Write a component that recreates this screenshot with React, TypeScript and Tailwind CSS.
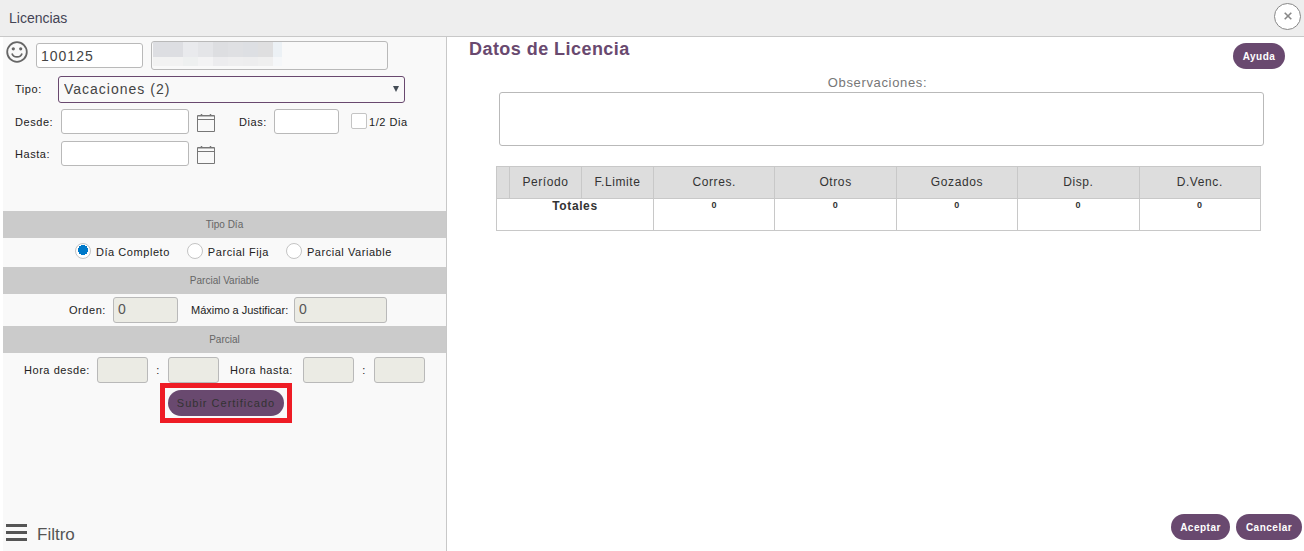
import React from "react";

const field = "h-[25px] rounded-[3px] border border-[#b9b9b9] bg-white px-1 text-sm tracking-[1px] text-[#444]";
const disabledField = "h-[26px] rounded-[3px] border border-[#b9b9b9] bg-[#ebebe4] px-1 pb-[2px] text-sm tracking-normal text-[#555]";
const pill = "h-[26px] rounded-full bg-[#69496f] text-[10px] font-bold tracking-wider text-white";

function Band({ children }: { children: React.ReactNode }) {
  return (
    <h2 className="flex h-[27px] items-center justify-center bg-[#cbcbcb] text-[10px] tracking-normal text-[#666]">{children}</h2>
  );
}

function CalendarButton({ label }: { label: string }) {
  return (
    <button type="button" aria-label={label} className="ml-2 mt-1">
      <svg width="18" height="20" viewBox="0 0 18 20" fill="none" stroke="#777">
        <path d="M.5 2.5h17v16H.5zM0 6.5h18" />
        <path d="M4.5 1v3M13.5 1v3" strokeWidth="1.5" />
        <path d="M1 3.5h16" stroke="#bbb" />
      </svg>
    </button>
  );
}

function DayRadio({ label, checked }: { label: string; checked?: boolean }) {
  return (
    <label className="flex items-center gap-[5px]">
      <input
        type="radio"
        name="tipo-dia"
        defaultChecked={checked}
        className="mb-[3px] size-4 appearance-none rounded-full border border-[#c4c4c4] bg-white bg-[radial-gradient(circle_at_7px_6px,#0079c9_5px,transparent_5px)] bg-size-[0_0] bg-no-repeat checked:bg-size-[100%_100%]"
      />
      {label}
    </label>
  );
}

const mosaic = [
  { w: "w-[30px]", top: "bg-[#dddee2]", low: "bg-[#f2f2f2]" },
  { w: "w-[15px]", top: "bg-[#e9eaed]", low: "bg-[#eef0f0]" },
  { w: "w-[15px]", top: "bg-[#e4e5e8]", low: "bg-[#f3f3f4]" },
  { w: "w-[15px]", top: "bg-[#dddee1]", low: "bg-[#ececee]" },
  { w: "w-[15px]", top: "bg-[#dfe0e3]", low: "bg-[#eeeeef]" },
  { w: "w-[15px]", top: "bg-[#dddfe3]", low: "bg-[#ededee]" },
  { w: "w-[15px]", top: "bg-[#dfdfe0]", low: "bg-[#efefef]" },
  { w: "w-[9px]", top: "bg-[#ecf1f5]", low: "bg-[#f5f7f9]" },
];

const totals = ["Corres.", "Otros", "Gozados", "Disp.", "D.Venc."];

export default function App() {
  return (
    <div className="flex min-h-screen flex-col bg-white font-['Liberation_Sans',Arial,sans-serif] text-[11px] text-[#222]">
      <header className="flex h-[37px] items-center justify-between border-b border-[#c8c8c8] bg-[#eee] pl-[9px] pr-[3px]">
        <h1 className="text-sm text-[#445]">Licencias</h1>
        <button
          type="button"
          aria-label="Cerrar"
          className="mb-1 flex size-[27px] items-center justify-center rounded-full border border-[#888] bg-white"
        >
          <svg width="8" height="8" viewBox="0 0 8 8" stroke="#888" strokeWidth="1.6">
            <path d="M.7.7l6.6 6.6M7.3.7L.7 7.3" />
          </svg>
        </button>
      </header>

      <div className="flex flex-1">
        <aside className="ml-[3px] flex w-[444px] shrink-0 flex-col border-r border-[#c8c8c8] bg-[#f9f9f9] tracking-wider">
          <div className="flex h-[39px] items-start pl-[3px] pt-1">
            <svg width="22" height="22" viewBox="0 0 22 22" fill="none" stroke="#666" className="mr-2">
              <circle cx="11" cy="11" r="9.8" strokeWidth="1.8" />
              <circle cx="7.3" cy="7.8" r="1.6" fill="#666" stroke="none" />
              <circle cx="14.7" cy="7.8" r="1.6" fill="#666" stroke="none" />
              <path d="M6 12.5c1.4 4.6 8.6 4.6 10 0" strokeWidth="1.7" />
            </svg>
            <input aria-label="Legajo" defaultValue="100125" className={`${field} mt-[2px] w-[107px]`} />
            <div className="relative ml-2">
              <input aria-label="Nombre" className="block h-[29px] w-[237px] rounded-[3px] border border-[#b9b9b9] bg-[#f9f9f9] px-1 text-sm" />
              <div aria-hidden="true" className="pointer-events-none absolute left-[2px] top-px flex">
                {mosaic.map((m, i) => (
                  <div key={i} className={m.w}>
                    <div className={`h-[15px] ${m.top}`} />
                    <div className={`h-[9px] ${m.low}`} />
                  </div>
                ))}
              </div>
            </div>
          </div>

          <div className="flex h-[33px] items-start pl-3">
            <label htmlFor="tipo" className="w-[43px] leading-[27px]">Tipo:</label>
            <div className="relative">
              <select
                id="tipo"
                className="block h-[27px] w-[347px] appearance-none rounded-[3px] border border-[#69496f] bg-[#f9f9f9] px-[5px] pb-px text-sm tracking-[1px] text-[#444]"
              >
                <option>Vacaciones (2)</option>
              </select>
              <svg width="6" height="6" viewBox="0 0 6 6" fill="#444c55" className="pointer-events-none absolute right-[6px] top-[10px]">
                <path d="M0 0h6L3 6z" />
              </svg>
            </div>
          </div>

          <div className="flex h-8 items-start pl-3">
            <label htmlFor="desde" className="w-[46px] leading-[26px]">Desde:</label>
            <input id="desde" className={`${field} w-[128px]`} />
            <CalendarButton label="Elegir desde" />
            <label htmlFor="dias" className="ml-6 w-[35px] leading-[26px]">Dias:</label>
            <input id="dias" className={`${field} w-[65px]`} />
            <label className="ml-3 flex items-center gap-[2px] leading-[26px]">
              <input type="checkbox" className="mb-[2px] size-4 appearance-none rounded-[2px] border border-[#c4c4c4] bg-white" />
              1/2 Dia
            </label>
          </div>

          <div className="flex h-[70px] items-start pl-3">
            <label htmlFor="hasta" className="w-[46px] leading-[26px]">Hasta:</label>
            <input id="hasta" className={`${field} w-[128px]`} />
            <CalendarButton label="Elegir hasta" />
          </div>

          <Band>Tipo Día</Band>
          <div className="flex h-[29px] items-center gap-[17px] pl-[72px]">
            <DayRadio label="Día Completo" checked />
            <DayRadio label="Parcial Fija" />
            <DayRadio label="Parcial Variable" />
          </div>

          <Band>Parcial Variable</Band>
          <div className="flex h-8 items-center pl-[66px]">
            <label htmlFor="orden" className="w-11">Orden:</label>
            <input id="orden" disabled defaultValue="0" className={`${disabledField} w-[65px]`} />
            <label htmlFor="maximo" className="ml-[13px] w-[103px] whitespace-nowrap tracking-normal">Máximo a Justificar:</label>
            <input id="maximo" disabled defaultValue="0" className={`${disabledField} w-[93px]`} />
          </div>

          <Band>Parcial</Band>
          <div className="flex h-[30px] items-center pl-[21px] pt-1">
            <label htmlFor="hora-desde" className="w-[73px]">Hora desde:</label>
            <input id="hora-desde" disabled className={`${disabledField} w-[51px]`} />
            <span className="w-5 text-center">:</span>
            <input aria-label="Minutos desde" disabled className={`${disabledField} w-[51px]`} />
            <label htmlFor="hora-hasta" className="ml-[11px] w-[73px]">Hora hasta:</label>
            <input id="hora-hasta" disabled className={`${disabledField} w-[51px]`} />
            <span className="w-5 text-center">:</span>
            <input aria-label="Minutos hasta" disabled className={`${disabledField} w-[51px]`} />
          </div>

          <div className="ml-[157px] flex h-10 w-[132px] items-center justify-center border-5 border-[#ee1c25]">
            <button type="button" className="h-[26px] w-[116px] rounded-full bg-[#69496f] text-[11px] tracking-[1px] text-[#333]">
              Subir Certificado
            </button>
          </div>

          <button type="button" className="mb-1 mt-auto flex items-center gap-[10px] pl-[3px] text-[17px] leading-6 tracking-normal text-[#555]">
            <svg width="21" height="18" viewBox="0 0 21 18" fill="#555" className="mb-1">
              <path d="M0 0h21v3H0zM0 7h21v3H0zM0 14h21v3H0z" />
            </svg>
            Filtro
          </button>
        </aside>

        <main className="flex min-w-0 flex-1 flex-col">
          <div className="flex h-[38px] items-start justify-between pl-[22px] pr-[19px]">
            <h2 className="text-lg leading-6 font-bold tracking-wide text-[#69496f]">Datos de Licencia</h2>
            <button type="button" className={`${pill} mt-[6px] w-[52px]`}>Ayuda</button>
          </div>
          <div className="flex flex-col pl-[52px] pr-10">
            <label htmlFor="observaciones" className="pb-px pr-2 text-center text-[13px] leading-4 tracking-wider text-[#777]">Observaciones:</label>
            <textarea id="observaciones" className="h-[54px] resize-none rounded-[3px] border border-[#b9b9b9] p-1 text-sm" />
          </div>

          <div className="mt-5 pl-[49px] pr-[43px]">
            <table className="w-full table-fixed border-collapse text-xs tracking-wider text-[#333]">
              <colgroup>
                <col className="w-[13px]" />
                <col className="w-[72px]" />
                <col className="w-[72px]" />
                {totals.map((t) => <col key={t} />)}
              </colgroup>
              <thead>
                <tr className="h-8 bg-[#ddd]">
                  <th className="border border-[#c8c8c8]" />
                  <th className="border border-[#c8c8c8] pb-[2px] font-normal">Período</th>
                  <th className="border border-[#c8c8c8] pb-[2px] font-normal">F.Limite</th>
                  {totals.map((t) => <th key={t} className="border border-[#c8c8c8] pb-[2px] font-normal">{t}</th>)}
                </tr>
              </thead>
              <tbody>
                <tr className="h-8 align-top">
                  <th colSpan={3} className="border border-[#c8c8c8] leading-[14px] font-bold">Totales</th>
                  {totals.map((t) => <td key={t} className="border border-[#c8c8c8] text-center text-[9px] leading-3 font-bold">0</td>)}
                </tr>
              </tbody>
            </table>
          </div>

          <div className="mb-[11px] mt-auto flex justify-end gap-[6px] pr-[2px]">
            <button type="button" className={`${pill} w-[59px]`}>Aceptar</button>
            <button type="button" className={`${pill} w-[66px]`}>Cancelar</button>
          </div>
        </main>
      </div>
    </div>
  );
}
